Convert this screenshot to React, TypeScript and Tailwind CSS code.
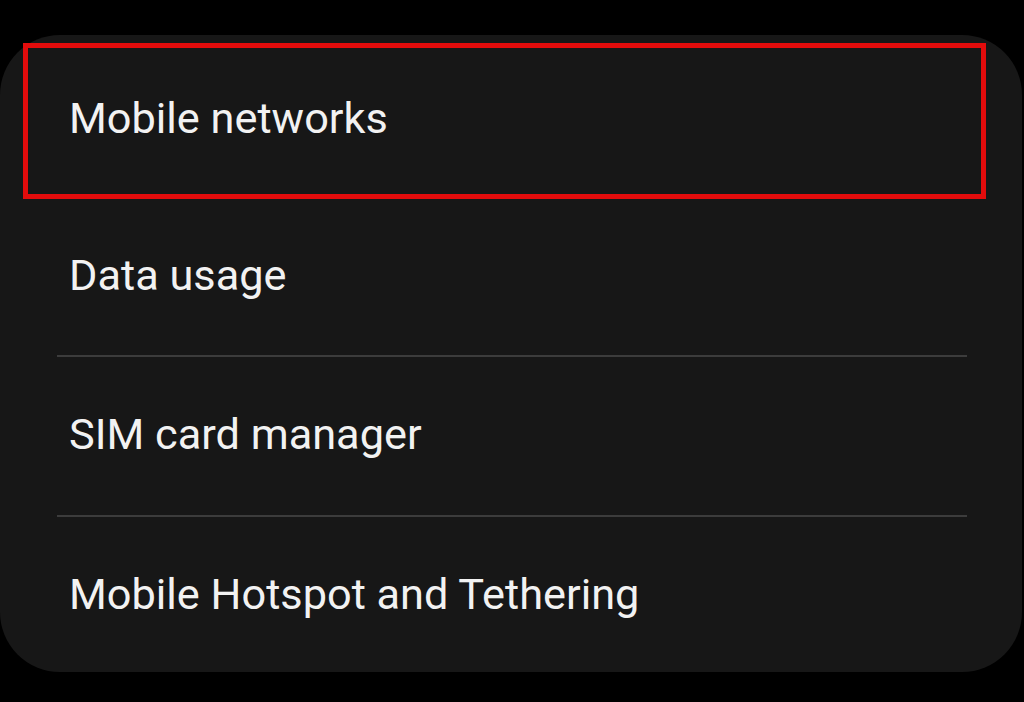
import React from "react";

const font = { fontFamily: "Roboto, 'Noto Sans', sans-serif" };

export default function App() {
  return (
    <div className="w-[1024px] h-[702px] bg-black overflow-hidden" style={font}>
      <div className="mt-[35px] w-[1022px] h-[637px] rounded-[60px] bg-[#171717] flex flex-col">
        <div className="mt-[8px] ml-[23px] w-[963px] h-[156px] border-[5px] border-[#e30c0c] flex items-center pl-[41px] pb-[5px]">
          <span className="text-[43.3px] text-[#f2f2f2] leading-none">Mobile networks</span>
        </div>
        <div className="h-[156px] flex items-center pl-[69px] pb-[3px]">
          <span className="text-[43.3px] text-[#f2f2f2] leading-none">Data usage</span>
        </div>
        <div className="ml-[57px] w-[910px] h-[2px] bg-[#3c3c3c]" />
        <div className="h-[158px] flex items-center pl-[69px] pb-[2px]">
          <span className="text-[43.3px] text-[#f2f2f2] leading-none">SIM card manager</span>
        </div>
        <div className="ml-[57px] w-[910px] h-[2px] bg-[#3c3c3c]" />
        <div className="h-[155px] flex items-center pl-[69px]">
          <span className="text-[43.3px] text-[#f2f2f2] leading-none">Mobile Hotspot and Tethering</span>
        </div>
      </div>
    </div>
  );
}
